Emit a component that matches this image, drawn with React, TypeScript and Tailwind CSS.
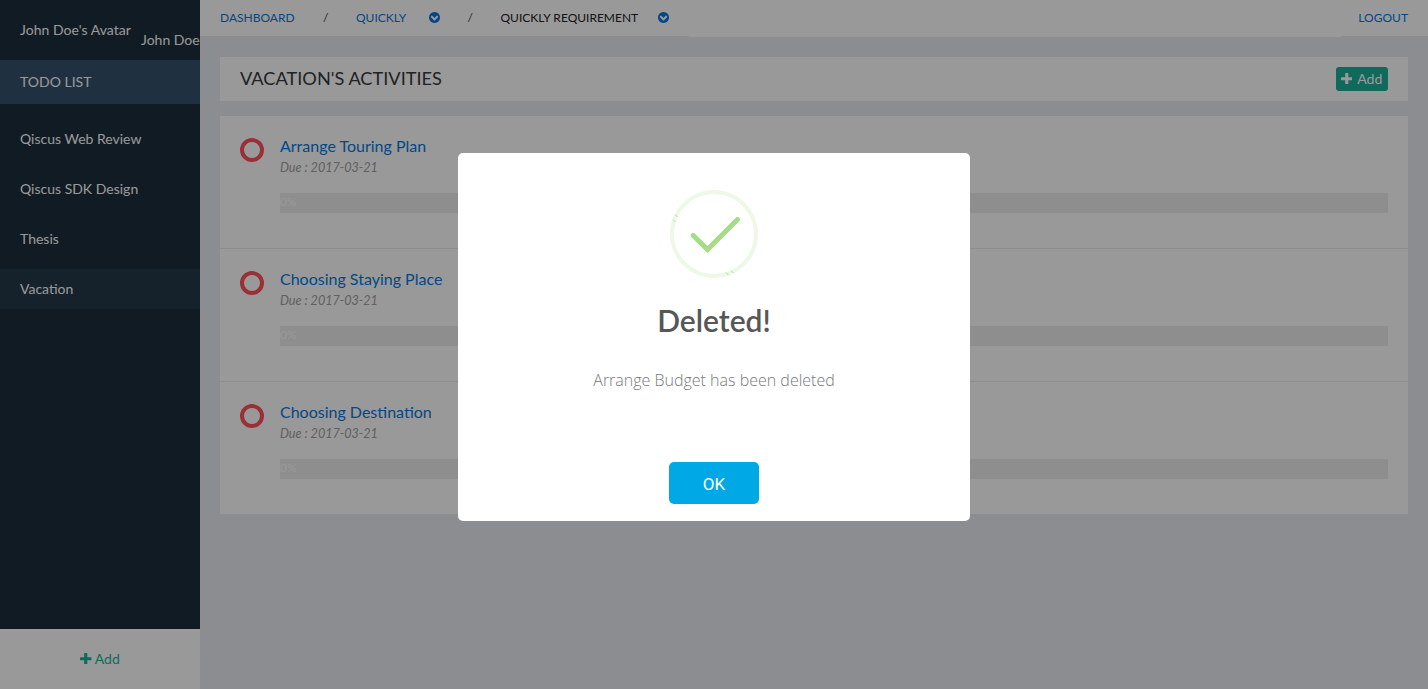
import React from "react";

const projects = ["Qiscus Web Review", "Qiscus SDK Design", "Thesis", "Vacation"];
const activities = ["Arrange Touring Plan", "Choosing Staying Place", "Choosing Destination"];

function Plus({ className = "" }: { className?: string }) {
  return (
    <svg viewBox="192 128 1408 1408" fill="currentColor" className={className}>
      <path d="M1600 736v192q0 40-28 68t-68 28h-416v416q0 40-28 68t-68 28h-192q-40 0-68-28t-28-68v-416h-416q-40 0-68-28t-28-68v-192q0-40 28-68t68-28h416v-416q0-40 28-68t68-28h192q40 0 68 28t28 68v416h416q40 0 68 28t28 68z" />
    </svg>
  );
}

function ChevronCircle({ className = "" }: { className?: string }) {
  return (
    <svg viewBox="128 128 1536 1536" fill="#0678e0" className={"mb-px h-[11px] w-[11px] " + className}>
      <path
        fillRule="evenodd"
        d="M941 1299l454-454q19-19 19-45t-19-45l-102-102q-19-19-45-19t-45 19l-307 307-307-307q-19-19-45-19t-45 19l-102 102q-19 19-19 45t19 45l454 454q19 19 45 19t45-19zm723-403q0 209-103 385.5t-279.5 279.5-385.5 103-385.5-103-279.5-279.5-103-385.5 103-385.5 279.5-279.5 385.5-103 385.5 103 279.5 279.5 103 385.5z"
      />
    </svg>
  );
}

function Sidebar() {
  return (
    <aside className="flex w-[200px] shrink-0 flex-col overflow-hidden bg-[#1c2d3b] text-sm leading-5 text-white">
      <div className="flex h-[60px] shrink-0 whitespace-nowrap pl-5">
        <span className="w-[111px] pt-5 tracking-[0.03px]">John Doe's Avatar</span>
        <span className="pl-2.5 pt-[30px]">John Doe</span>
      </div>
      <div className="flex h-11 shrink-0 items-center bg-[#34526d] pl-5">TODO LIST</div>
      <nav className="flex flex-1 flex-col gap-2.5 pt-[15px]">
        {projects.map((p) => (
          <a key={p} className={"flex h-10 items-center pl-5 " + (p === "Vacation" ? "bg-[#243748]" : "")}>
            {p}
          </a>
        ))}
      </nav>
      <button className="flex h-[60px] shrink-0 items-center justify-center gap-[3px] bg-white text-[#1ab19a]">
        <Plus className="mb-px h-[11.5px] w-[11.5px]" />
        Add
      </button>
    </aside>
  );
}

function Header() {
  return (
    <header className="flex h-9 shrink-0 bg-white text-xs leading-[18px]">
      <div className="flex w-[489px] items-center whitespace-nowrap pl-5 text-[#0678e0]">
        <a className="w-[103px]">DASHBOARD</a>
        <span className="w-[33px] text-[#373a3c]">/</span>
        <a className="w-[73px]">QUICKLY</a>
        <ChevronCircle />
        <span className="ml-[27.5px] w-[33px] text-[#373a3c]">/</span>
        <a className="w-[157.5px] text-[#222222]">QUICKLY REQUIREMENT</a>
        <ChevronCircle />
      </div>
      <div className="h-[37px] flex-1 bg-white" />
      <div className="flex w-[87px] items-center justify-end pr-5 text-[#0678e0]">LOGOUT</div>
    </header>
  );
}

function Activity({ name }: { name: string }) {
  return (
    <article className="flex h-[133px] border-b border-[#ececec] px-5 pt-[22px] last:h-[132px] last:border-b-0">
      <div className="h-6 w-6 shrink-0 rounded-full border-4 border-[#ff505c]" />
      <div className="ml-4 flex-1">
        <h2 className="-mt-[3px] text-base leading-[22px] text-[#0678e0]">{name}</h2>
        <p className="pt-px text-[12.6px] italic leading-5 text-[#a0a0a0]">Due : 2017-03-21</p>
        <div className="mt-[15px] h-5 bg-[#ededed] text-xs leading-[18px] text-white">0%</div>
      </div>
    </article>
  );
}

function SuccessDialog() {
  return (
    <div className="fixed inset-0 flex justify-center bg-black/40 pt-[153px]">
      <section role="dialog" className="flex h-[368px] w-[512px] flex-col items-center rounded-[5px] bg-white">
        <svg viewBox="0 0 88 88" fill="none" className="mt-[37px] h-[88px] w-[88px]">
          <circle cx="44" cy="44" r="42" stroke="#edf8e7" strokeWidth="4" />
          <path d="M23.2 45.5 L37.5 59.5 L67.5 29.5" stroke="#a5dc86" strokeWidth="5" strokeLinecap="round" />
          <path d="M5 24.5l2.5 2.5M3 29.5l2.5 2.5M56 82.5l2.5 2.5M61 80.5l2.5 2.5" stroke="#a5dc86" strokeWidth=".9" />
        </svg>
        <h1 className="mt-[22px] text-[30px] font-semibold leading-10 text-[#575757]">Deleted!</h1>
        <p className="mt-7 font-['Open_Sans'] text-base font-light leading-6 text-[#797979]">
          Arrange Budget has been deleted
        </p>
        <button className="mt-[70px] h-[42px] w-[90px] rounded-[5px] bg-[#00a8e6] pt-[3px] font-[Roboto] text-[17px] font-normal text-white">
          OK
        </button>
      </section>
    </div>
  );
}

export default function App() {
  return (
    <div className="flex h-screen overflow-hidden bg-[#e9ebf1] font-[Lato,sans-serif]">
      <Sidebar />
      <div className="flex min-w-0 flex-1 flex-col">
        <Header />
        <main className="flex flex-col gap-[15px] px-5 pt-[21px]">
          <div className="flex h-11 items-center justify-between bg-white px-5">
            <h1 className="pb-0.5 text-[18.2px] leading-6 text-[#373a3c]">VACATION'S ACTIVITIES</h1>
            <button className="flex h-6 w-[52px] items-center justify-center gap-[5px] rounded-[3px] bg-[#1ab19a] pr-px text-sm text-white">
              <Plus className="mb-px h-[11.5px] w-[11.5px]" />
              Add
            </button>
          </div>
          <div className="bg-white">
            {activities.map((a) => (
              <Activity key={a} name={a} />
            ))}
          </div>
        </main>
      </div>
      <SuccessDialog />
    </div>
  );
}
